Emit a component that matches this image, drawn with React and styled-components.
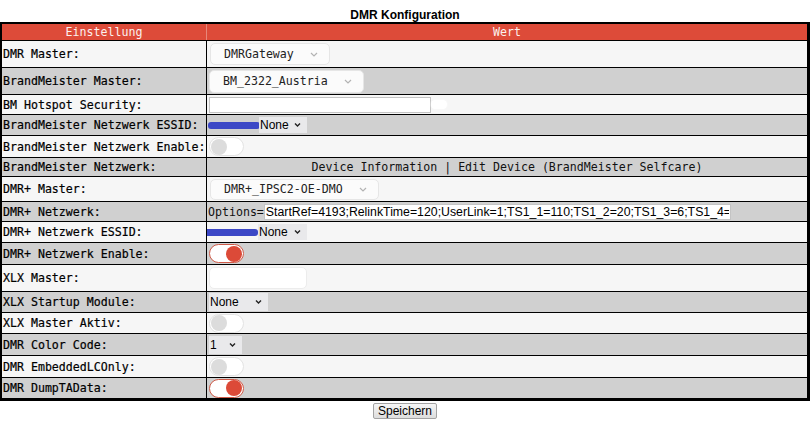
import React from 'react';
import styled, { createGlobalStyle } from 'styled-components';

const Global = createGlobalStyle`
  html, body { margin: 0; padding: 0; background: #fff; }
  body { font-family: "DejaVu Sans Mono", "Liberation Mono", monospace; }
`;

const Page = styled.div`
  width: 812px;
`;

const Title = styled.div`
  font-family: "Liberation Sans", Arial, sans-serif;
  font-weight: bold;
  font-size: 12px;
  line-height: 14px;
  text-align: center;
  color: #000;
  height: 22px;
  padding-top: 8px;
  box-sizing: border-box;
  width: 810px;
`;

const Table = styled.div`
  width: 810px;
  box-sizing: border-box;
  border-style: solid;
  border-color: #000;
  border-width: 2px 3px 3px 2px;
  font-size: 11.6px;
  color: #000;
`;

const HeadRow = styled.div`
  display: grid;
  grid-template-columns: 205px 1fr;
  height: 16px;
  background: #dd4b39;
  color: #fbf1ee;
`;

const HeadCell = styled.div`
  display: flex;
  align-items: center;
  justify-content: center;
  line-height: 16px;
  border-right: ${p => (p.$first ? '1px solid #e7877a' : 'none')};
`;

const Row = styled.div`
  display: grid;
  grid-template-columns: 205px 1fr;
  height: ${p => p.$h}px;
  box-sizing: border-box;
  border-top: 1px solid #000;
  background: ${p => (p.$dark ? '#d0d0d0' : '#f6f6f6')};
`;

const Label = styled.div`
  display: flex;
  align-items: center;
  padding-left: 1px;
  border-right: 1px solid #000;
  white-space: nowrap;
  overflow: hidden;
  -webkit-text-stroke: 0.2px #000;
`;

const Value = styled.div`
  display: flex;
  align-items: center;
  justify-content: ${p => (p.$center ? 'center' : 'flex-start')};
  padding-left: ${p => (p.$pad ?? 2)}px;
  white-space: nowrap;
  min-width: 0;
  overflow: hidden;
`;

const MonoText = styled.span`
  color: #111;
`;

const DropBox = styled.div`
  display: inline-flex;
  align-items: center;
  gap: 16px;
  height: ${p => p.$h ?? 22}px;
  box-sizing: border-box;
  padding: 0 11px 0 13px;
  background: #fbfbfb;
  border: 1px solid #e6e6e6;
  border-radius: 5px;
  color: #222;
`;

const SelectWrap = styled.span`
  position: relative;
  display: inline-flex;
  margin-left: ${p => p.$ml ?? 0}px;
`;

const NativeSelect = styled.select`
  appearance: none;
  -webkit-appearance: none;
  border: none;
  outline: none;
  margin: 0;
  border-radius: 0;
  background: #e9e9eb;
  font-family: "Liberation Sans", Arial, sans-serif;
  font-size: 12px;
  color: #000;
  width: ${p => p.$w}px;
  height: ${p => p.$h ?? 16}px;
  padding: 0 0 0 ${p => p.$pl ?? 1}px;
`;

const Caret = styled.svg`
  position: absolute;
  right: 6px;
  top: 50%;
  transform: translateY(-50%);
  pointer-events: none;
`;

const Track = styled.span`
  display: inline-flex;
  align-items: center;
  justify-content: ${p => (p.$on ? 'flex-end' : 'flex-start')};
  width: 35px;
  height: 19px;
  box-sizing: border-box;
  padding: 0 1px;
  border-radius: 10px;
  background: #fff;
  border: ${p => (p.$on ? '1.5px solid #cf5a48' : '1px solid #e3e3e3')};
`;

const Knob = styled.span`
  width: 16px;
  height: 16px;
  border-radius: 50%;
  background: ${p => (p.$on ? '#dc4a38' : '#dcdcdc')};
`;

const TextInput = styled.input`
  box-sizing: border-box;
  height: 16px;
  width: ${p => p.$w}px;
  border: 1px solid #c4c4c4;
  background: #fff;
  font-family: "Liberation Sans", Arial, sans-serif;
  font-size: 12.3px;
  color: #000;
  padding: 0 1px;
  margin: 0;
  outline: none;
`;

const Hint = styled.span`
  width: 16px;
  height: 9px;
  border-radius: 5px;
  background: #fff;
  box-shadow: 0 0 2px #fff;
`;

const Redact = styled.span`
  width: ${p => p.$w}px;
  height: 7px;
  margin-left: ${p => p.$ml ?? 0}px;
  background: #3c48c6;
  border-radius: 3px;
`;

const EmptyBox = styled.div`
  width: 98px;
  height: 22px;
  box-sizing: border-box;
  background: #fff;
  border: 1px solid #ececec;
  border-radius: 5px;
`;

const Footer = styled.div`
  width: 810px;
  display: flex;
  justify-content: center;
  padding-top: 2px;
`;

const SaveButton = styled.button`
  font-family: "Liberation Sans", Arial, sans-serif;
  font-size: 12px;
  line-height: 14px;
  height: 16px;
  padding: 0 4px;
  margin: 0;
  border: 1px solid #a3a3a3;
  border-radius: 2px;
  background: linear-gradient(#f6f6f6, #dddddd);
  color: #000;
`;

const Chevron = () => (
  <svg width="8" height="5" viewBox="0 0 8 5">
    <polyline points="1,1 4,4 7,1" fill="none" stroke="#b3b3b3" strokeWidth="1.2" />
  </svg>
);

const Dropdown = ({ children, h }) => (
  <DropBox $h={h}>
    <span>{children}</span>
    <Chevron />
  </DropBox>
);

const Select = ({ value, w, h, ml }) => (
  <SelectWrap $ml={ml}>
    <NativeSelect $w={w} $h={h} defaultValue={value}>
      <option value={value}>{value}</option>
    </NativeSelect>
    <Caret width="7" height="5" viewBox="0 0 7 5">
      <polyline points="1,1 3.5,3.5 6,1" fill="none" stroke="#222" strokeWidth="1.4" />
    </Caret>
  </SelectWrap>
);

const Toggle = ({ on }) => (
  <Track $on={on}>
    <Knob $on={on} />
  </Track>
);

export default function App() {
  return (
    <Page>
      <Global />
      <Title>DMR Konfiguration</Title>
      <Table>
        <HeadRow>
          <HeadCell $first>Einstellung</HeadCell>
          <HeadCell>Wert</HeadCell>
        </HeadRow>

        <Row $h={27}>
          <Label>DMR Master:</Label>
          <Value $pad={3}><Dropdown>DMRGateway</Dropdown></Value>
        </Row>
        <Row $h={27} $dark>
          <Label>BrandMeister Master:</Label>
          <Value $pad={2}><Dropdown h={23}>BM_2322_Austria</Dropdown></Value>
        </Row>
        <Row $h={20}>
          <Label>BM Hotspot Security:</Label>
          <Value $pad={2}>
            <TextInput type="password" $w={222} defaultValue="" />
            <Hint />
          </Value>
        </Row>
        <Row $h={21} $dark>
          <Label>BrandMeister Netzwerk ESSID:</Label>
          <Value $pad={1}>
            <Redact $w={52} />
            <Select value="None" w={48} ml={-1} />
          </Value>
        </Row>
        <Row $h={22}>
          <Label>BrandMeister Netzwerk Enable:</Label>
          <Value $pad={2}><Toggle /></Value>
        </Row>
        <Row $h={19} $dark>
          <Label>BrandMeister Netzwerk:</Label>
          <Value $center $pad={0}>
            <MonoText>Device Information | Edit Device (BrandMeister Selfcare)</MonoText>
          </Value>
        </Row>
        <Row $h={25}>
          <Label>DMR+ Master:</Label>
          <Value $pad={3}><Dropdown h={21}>DMR+_IPSC2-OE-DMO</Dropdown></Value>
        </Row>
        <Row $h={20} $dark>
          <Label>DMR+ Netzwerk:</Label>
          <Value $pad={1}>
            <MonoText>Options=</MonoText>
            <TextInput
              type="text"
              $w={467}
              defaultValue="StartRef=4193;RelinkTime=120;UserLink=1;TS1_1=110;TS1_2=20;TS1_3=6;TS1_4="
            />
          </Value>
        </Row>
        <Row $h={21}>
          <Label>DMR+ Netzwerk ESSID:</Label>
          <Value $pad={0}>
            <Redact $w={53} $ml={-2} />
            <Select value="None" w={49} />
          </Value>
        </Row>
        <Row $h={22} $dark>
          <Label>DMR+ Netzwerk Enable:</Label>
          <Value $pad={2}><Toggle on /></Value>
        </Row>
        <Row $h={27}>
          <Label>XLX Master:</Label>
          <Value $pad={2}><EmptyBox /></Value>
        </Row>
        <Row $h={21} $dark>
          <Label>XLX Startup Module:</Label>
          <Value $pad={2}><Select value="None" w={59} h={18} /></Value>
        </Row>
        <Row $h={21}>
          <Label>XLX Master Aktiv:</Label>
          <Value $pad={2}><Toggle /></Value>
        </Row>
        <Row $h={22} $dark>
          <Label>DMR Color Code:</Label>
          <Value $pad={2}><Select value="1" w={33} h={18} /></Value>
        </Row>
        <Row $h={22}>
          <Label>DMR EmbeddedLCOnly:</Label>
          <Value $pad={2}><Toggle /></Value>
        </Row>
        <Row $h={21} $dark>
          <Label>DMR DumpTAData:</Label>
          <Value $pad={2}><Toggle on /></Value>
        </Row>
      </Table>
      <Footer>
        <SaveButton type="button">Speichern</SaveButton>
      </Footer>
    </Page>
  );
}
